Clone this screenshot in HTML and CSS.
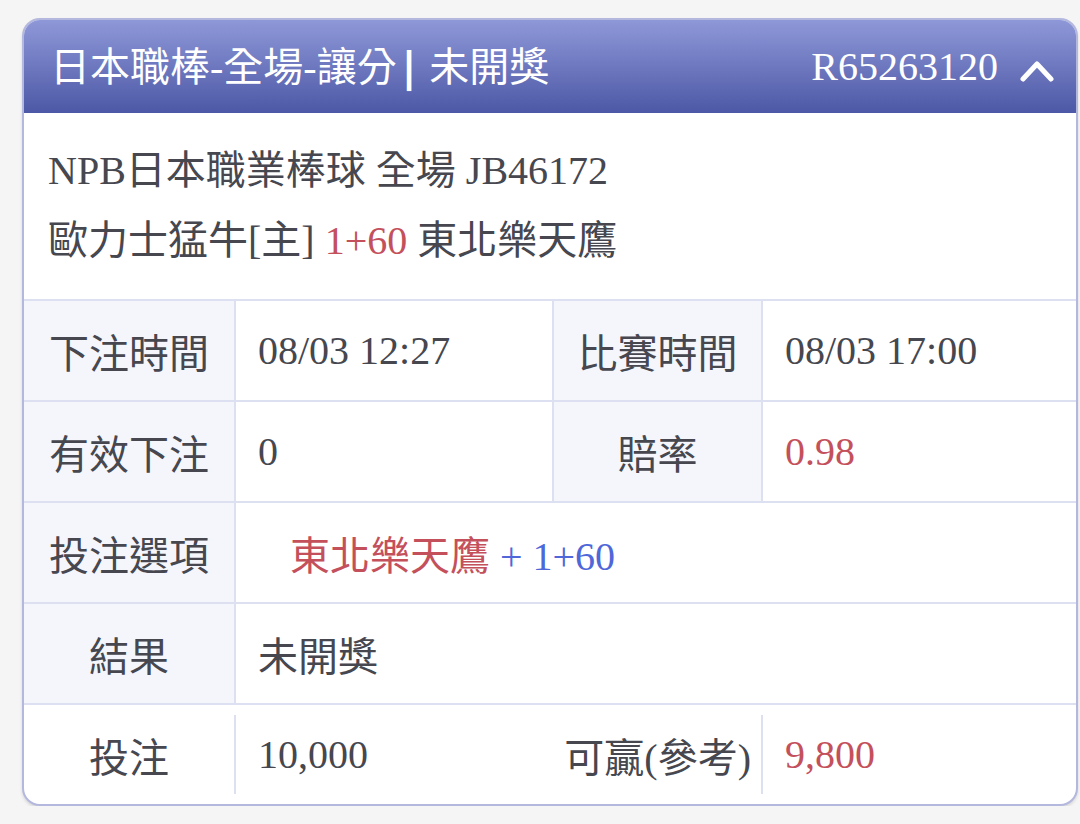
FILE: index.html
```html
<!DOCTYPE html>
<html lang="zh-Hant">
<head>
    <meta charset="UTF-8">
    <meta name="viewport" content="width=device-width, initial-scale=1.0">
    <title>注單明細</title>
    <link rel="stylesheet" href="styles.css">
</head>
<body>
    <div class="card">
        <!-- 標題列 -->
        <div class="card-head">
            <div class="head-title">日本職棒-全場-讓分<span class="bar">|</span> 未開獎</div>
            <div class="head-right">
                <span class="order-no">R65263120</span>
                <svg class="chevron" width="34" height="22" viewBox="0 0 34 22">
                    <polyline points="3,19 17,4 31,19" fill="none" stroke="#fff" stroke-width="5" stroke-linecap="round" stroke-linejoin="round"/>
                </svg>
            </div>
        </div>

        <!-- 賽事資訊 -->
        <div class="info">
            <p>NPB日本職業棒球 全場 JB46172</p>
            <p>歐力士猛牛[主] <span class="red">1+60</span> 東北樂天鷹</p>
        </div>

        <!-- 明細表 -->
        <div class="row">
            <div class="cell label">下注時間</div>
            <div class="cell value">08/03 12:27</div>
            <div class="cell label">比賽時間</div>
            <div class="cell value">08/03 17:00</div>
        </div>
        <div class="row">
            <div class="cell label">有效下注</div>
            <div class="cell value">0</div>
            <div class="cell label">賠率</div>
            <div class="cell value red">0.98</div>
        </div>
        <div class="row">
            <div class="cell label">投注選項</div>
            <div class="cell value wide"><span class="pick"><span class="red">東北樂天鷹</span> <span class="blue">+ 1+60</span></span></div>
        </div>
        <div class="row">
            <div class="cell label">結果</div>
            <div class="cell value wide">未開獎</div>
        </div>
        <div class="row row-last">
            <div class="cell">投注</div>
            <div class="cell value sep">10,000</div>
            <div class="cell win">可贏(參考)</div>
            <div class="cell value sep red">9,800</div>
        </div>
    </div>
</body>
</html>
```

FILE: styles.css
```css
body {
    margin: 0;
    padding: 18px 2px 0 22px;
    background: #f5f5f5;
    font-family: "Liberation Serif", "Noto Sans CJK TC", serif;
    font-size: 40px;
    color: #46474f;
}
.card {
    width: 1056px;
    box-sizing: border-box;
    border: 2px solid #b4b8de;
    border-radius: 18px;
    overflow: hidden;
    background: #fff;
    box-shadow: 0 2px 3px rgba(0, 0, 0, 0.12);
}
.card-head {
    height: 93px;
    display: flex;
    align-items: center;
    justify-content: space-between;
    padding: 0 22px 0 26px;
    background: linear-gradient(#8e98d8, #4d58a6);
    color: #fff;
}
.head-title {
    line-height: 1;
    padding-top: 2px;
}
.bar {
    margin: 0 3px 0 5px;
    font-family: "DejaVu Sans", sans-serif;
    font-weight: 700;
}
.head-right {
    display: flex;
    align-items: center;
    gap: 22px;
    line-height: 1;
}
.chevron {
    margin-top: 8px;
}
.info {
    height: 186px;
    box-sizing: border-box;
    padding: 23px 24px;
    line-height: 70px;
}
.info p {
    margin: 0;
}
.row {
    display: grid;
    grid-template-columns: 210px 318px 209px 1fr;
    height: 101px;
    box-sizing: border-box;
    border-top: 2px solid #dde0f1;
}
.cell {
    display: flex;
    align-items: center;
    justify-content: center;
}
.label {
    background: #f5f6fb;
}
.row .cell + .cell {
    border-left: 2px solid #dde0f1;
}
.value {
    justify-content: flex-start;
    padding-left: 22px;
}
.wide {
    grid-column: 2 / 5;
}
.pick {
    margin-left: 32px;
}
.row-last {
    align-items: center;
}
.row-last .cell {
    height: 79px;
}
.row-last .cell + .cell {
    border-left: none;
}
.row-last .cell.sep {
    border-left: 2px solid #dde0f1;
}
.win {
    justify-content: flex-end;
    padding-right: 10px;
}
.red {
    color: #c4505c;
}
.blue {
    color: #4f67d9;
}
```
